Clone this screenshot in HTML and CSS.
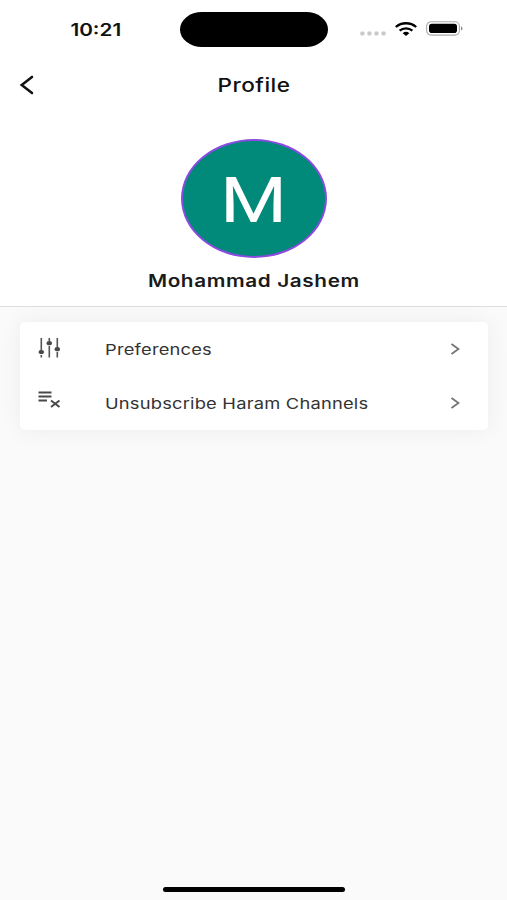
FILE: index.html
```
<!DOCTYPE html>
<html lang="en">
<head>
    <meta charset="UTF-8">
    <meta name="viewport" content="width=device-width, initial-scale=1.0">
    <title>Profile</title>
    <link rel="stylesheet" href="styles.css">
</head>
<body>

<div class="screen">
    <!-- Status bar -->
    <div class="status-bar">
        <div class="time"><span class="wide">10:21</span></div>
        <div class="island"></div>
        <div class="status-icons">
            <svg class="signal" width="26" height="5" viewBox="0 0 26 5" fill="#c9c9c9">
                <rect x="0.3" y="0.6" width="4.2" height="3.8" rx="1.3"/>
                <rect x="7.3" y="0.6" width="4.2" height="3.8" rx="1.3"/>
                <rect x="14.4" y="0.6" width="4.2" height="3.8" rx="1.3"/>
                <rect x="21.500" y="0.6" width="4.2" height="3.8" rx="1.3"/>
            </svg>
            <svg class="wifi" width="22" height="14" viewBox="0 0 22 14" fill="none" stroke="#000" stroke-width="2.3">
                <path d="M0.8 5C6.5 0 15.500 0 21.200 5"/>
                <path d="M4.600 8.600C8.300 5.500 13.700 5.500 17.400 8.600"/>
                <path d="M7.700 11.200C9.600 9.400 12.400 9.400 14.300 11.200L11 13.900Z" fill="#000" stroke="none"/>
            </svg>
            <svg class="battery" width="37" height="15" viewBox="0 0 37 15">
                <rect x="0.600" y="0.700" width="32.800" height="13.400" rx="4.500" fill="#fff" stroke="#aaa" stroke-width="1.100"/>
                <rect x="3" y="2.800" width="28" height="9.200" rx="2.800" fill="#000"/>
                <path d="M35 5.200C37 6.200 37 8.600 35 9.600Z" fill="#888"/>
            </svg>
        </div>
    </div>

    <!-- Header -->
    <div class="header">
        <svg class="back" width="15" height="20" viewBox="0 0 15 20" fill="none" stroke="#111" stroke-width="2.500" stroke-linecap="round">
            <path d="M13 1.900L2.700 10L13 18.100"/>
        </svg>
        <h1><span class="wide">Profile</span></h1>
    </div>

    <!-- User -->
    <div class="user">
        <div class="avatar"><span class="wide">M</span></div>
        <h2><span class="wide">Mohammad Jashem</span></h2>
    </div>

    <!-- Menu -->
    <div class="menu">
        <div class="menu-item">
            <svg class="menu-icon" width="24" height="22" viewBox="0 0 24 22" stroke="#555" stroke-width="1.600" fill="#484848">
                <path d="M3.300 1V15M3.300 18V20.500M11.300 1V4M11.300 9V20.500M19.300 1V11M19.300 15V20.500" fill="none"/>
                <ellipse cx="3.300" cy="15" rx="2.700" ry="2.100" stroke="none"/>
                <ellipse cx="11.300" cy="6.200" rx="2.700" ry="2.100" stroke="none"/>
                <ellipse cx="19.300" cy="12.200" rx="2.700" ry="2.100" stroke="none"/>
            </svg>
            <span class="menu-label"><span class="wide">Preferences</span></span>
            <svg class="arrow" width="10" height="12" viewBox="0 0 10 12" fill="none" stroke="#777" stroke-width="1.900">
                <path d="M1.500 0.900L8.500 6L1.500 11.100"/>
            </svg>
        </div>
        <div class="menu-item">
            <svg class="menu-icon menu-icon-list" width="24" height="22" viewBox="0 0 24 22" fill="none" stroke="#484848" stroke-width="2">
                <path d="M0.500 3.500H13.500M0.500 7.500H13.500M0.500 11.500H9"/>
                <path d="M13 11.500L21.500 18M21.500 11.500L13 18"/>
            </svg>
            <span class="menu-label"><span class="wide">Unsubscribe Haram Channels</span></span>
            <svg class="arrow" width="10" height="12" viewBox="0 0 10 12" fill="none" stroke="#777" stroke-width="1.900">
                <path d="M1.500 0.900L8.500 6L1.500 11.100"/>
            </svg>
        </div>
    </div>

    <div class="home-bar"></div>
</div>

</body>
</html>
```
FILE: styles.css
```
* {
    padding: 0;
    margin: 0;
    box-sizing: border-box;
}

body {
    font-family: Inter, "Liberation Sans", sans-serif;
    background-color: #fafafa;
    color: #111;
}

.screen {
    height: 900px;
    display: flex;
    flex-direction: column;
    overflow: hidden;
}

/* Wide lettering */
.wide {
    display: inline-block;
    transform: scaleX(1.22);
    white-space: nowrap;
}

.status-bar {
    display: grid;
    grid-template-columns: 180px 148px 1fr;
    height: 59px;
    padding-top: 12px;
    background-color: #fff;
}

.time {
    padding-left: 12px;
    height: 36px;
    line-height: 36px;
    text-align: center;
    font-size: 17px;
    font-weight: 600;
}

.island {
    height: 35px;
    background-color: #000;
    border-radius: 22px / 17.5px;
}

.status-icons {
    display: flex;
    align-items: flex-start;
    padding-left: 32px;
}

.signal {
    margin-top: 19px;
}

.wifi {
    margin: 10px 0 0 9px;
}

.battery {
    margin: 9px 0 0 9px;
}

.header {
    display: grid;
    grid-template-columns: 40px 1fr 40px;
    align-items: center;
    height: 52px;
    background-color: #fff;
}

.back {
    margin-left: 19px;
}

.header h1 {
    padding-left: 1px;
    text-align: center;
    font-size: 18.5px;
    line-height: 24px;
    font-weight: 500;
    letter-spacing: 0.4px;
}

.user {
    display: flex;
    flex-direction: column;
    align-items: center;
    height: 196px;
    padding-top: 28px;
    background-color: #fff;
    border-bottom: 1px solid #dedede;
}

.avatar {
    width: 146px;
    height: 119px;
    border: 2px solid #8a4be0;
    border-radius: 50%;
    background-color: #018979;
    color: #fff;
    font-family: Roboto, sans-serif;
    font-size: 63px;
    line-height: 119px;
    text-align: center;
}

.user h2 {
    margin-top: 11px;
    font-size: 17px;
    line-height: 24px;
    font-weight: 600;
    letter-spacing: 0.5px;
    color: #1a1a1a;
}

.menu {
    margin: 15px 19px 0 20px;
    background-color: #fff;
    border-radius: 5px;
    box-shadow: 0 0 24px rgba(0, 0, 0, 0.06);
}

.menu-item {
    display: flex;
    align-items: center;
    height: 54px;
    padding: 0 28px 0 18px;
}

.menu-icon {
    margin-bottom: 2px;
}

.menu-icon-list {
    margin-bottom: 7px;
}

.menu-label {
    flex: 1;
    padding-left: 42.5px;
    font-size: 15px;
    letter-spacing: 0.17px;
    color: #333;
}

.menu-label .wide {
    transform-origin: left;
}

.home-bar {
    width: 182px;
    height: 5px;
    margin: auto auto 8px;
    background-color: #000;
    border-radius: 3px;
}
```
